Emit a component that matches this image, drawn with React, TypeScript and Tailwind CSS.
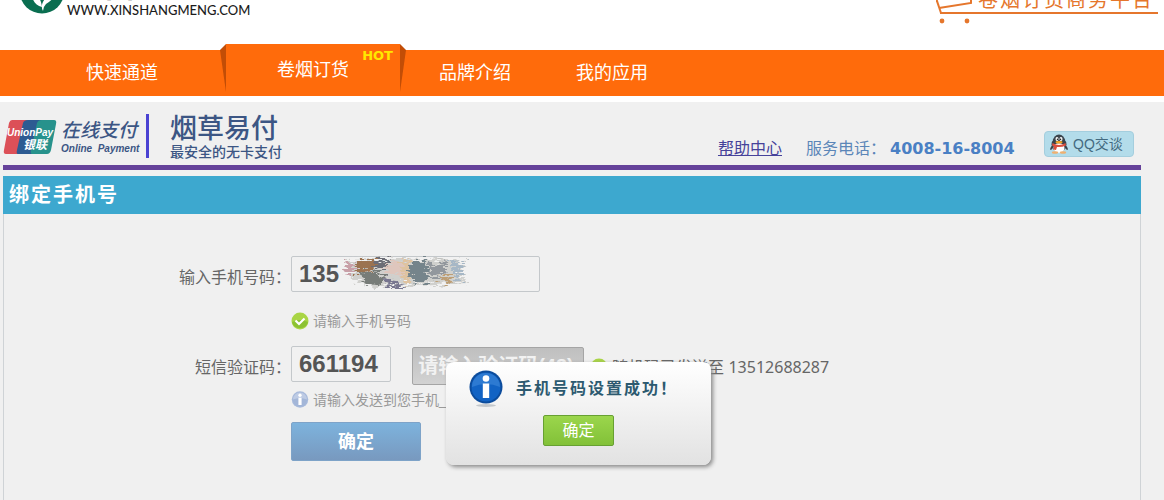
import React from "react";

function LeafLogo() {
  return (
    <svg viewBox="0 0 44 44" className="h-11 w-11 shrink-0" aria-hidden="true">
      <ellipse cx="22" cy="22" rx="22" ry="21.500" fill="#0a6e50" />
      <path d="M22 37 C15 35 12 31 11 20 C17 25 21 28 22 37 Z" fill="#fff" />
      <path d="M23 41 C20 36 22 29 36 18 C35 28 32 30 26 34 Q23 37 23 41 Z" fill="#fff" />
    </svg>
  );
}

function CartOutline() {
  return (
    <svg viewBox="0 0 224 46" className="absolute inset-0 h-full w-full" fill="none" stroke="#e5762c" aria-hidden="true">
      <path d="M0 20 L4 32 L5 35" strokeWidth="2" />
      <path d="M3 30 L35 25 L35 14" strokeWidth="2" />
      <path d="M4 35 H222" strokeWidth="2" />
      <circle cx="6" cy="43" r="2.4" fill="#e5762c" stroke="none" />
      <circle cx="31" cy="43" r="2.4" fill="#e5762c" stroke="none" />
    </svg>
  );
}

function UnionPay() {
  return (
    <div className="relative h-9 w-14 shrink-0">
      <svg viewBox="0 0 56 36" className="h-full w-full" aria-hidden="true">
        <path d="M9 1 H25 L17 35 H3 Q0 35 1 31 L6 4 Q7 1 9 1 Z" fill="#dc5058" />
        <path d="M25 1 H39 L31 35 H15 Q13 35 14 31 L20 4 Q21 1 25 1 Z" fill="#2d5b92" />
        <path d="M39 1 H51 Q54 1 53 5 L48 31 Q47 35 44 35 H29 Q27 35 28 31 L34 4 Q35 1 39 1 Z" fill="#27928c" />
      </svg>
      <div className="absolute inset-x-0 top-2 flex flex-col text-white italic">
        <span className="pl-1 text-[10px] leading-3 font-bold">UnionPay</span>
        <span className="pl-5 text-xs leading-3 font-bold">银联</span>
      </div>
    </div>
  );
}

function Penguin() {
  return (
    <svg viewBox="0 0 20 20" className="h-5 w-5" aria-hidden="true">
      <ellipse cx="10" cy="10.500" rx="7.500" ry="7.500" fill="#3b444c" />
      <path d="M2.500 12 Q0 16 2 16 L5 13 Z M17.500 12 Q20 16 18 16 L15 13 Z" fill="#3b444c" />
      <ellipse cx="10" cy="7" rx="6" ry="6.500" fill="#3b444c" />
      <ellipse cx="10" cy="14" rx="5.500" ry="4.800" fill="#fff" />
      <ellipse cx="8" cy="5" rx="1.500" ry="2" fill="#fff" />
      <ellipse cx="12" cy="5" rx="1.500" ry="2" fill="#fff" />
      <circle cx="8.400" cy="5.300" r=".7" fill="#111" />
      <circle cx="11.600" cy="5.300" r=".7" fill="#111" />
      <ellipse cx="10" cy="8.200" rx="3.500" ry="1.200" fill="#f5a623" />
      <path d="M3.500 9 Q10 13 16.500 9 L17 11.500 Q10 14.500 3 11.500 Z M5 12 L8 13 L7 16 L4.500 15.500 Z" fill="#d9503f" />
      <ellipse cx="6" cy="18.500" rx="3.200" ry="1.300" fill="#f0b070" />
      <ellipse cx="14" cy="18.500" rx="3.200" ry="1.300" fill="#f0b070" />
    </svg>
  );
}

function CheckBadge() {
  return (
    <svg viewBox="0 0 18 18" className="h-[18px] w-[18px] shrink-0" aria-hidden="true">
      <circle cx="9" cy="9" r="8.500" fill="#a9d545" />
      <path d="M1 10 Q9 6 17 10 A8.300 8.300 0 0 1 1 10 Z" fill="#8cc232" />
      <path d="M4.500 8.500 L8 12 L13.500 6.500" fill="none" stroke="#fff" strokeWidth="2.200" />
    </svg>
  );
}

function InfoBadge({ pale }: { pale?: boolean }) {
  return (
    <svg viewBox="0 0 36 38" className={pale ? "h-[19px] w-[18px] shrink-0" : "h-[38px] w-9 shrink-0"} aria-hidden="true">
      {!pale && <ellipse cx="18" cy="35.500" rx="10" ry="1.500" fill="#c4c8cc" />}
      <circle cx="18" cy="17" r="16.500" fill={pale ? "#a9bbdc" : "#0c4c9c"} />
      <circle cx="18" cy="17" r="14.500" fill={pale ? "#a3b6d8" : "#1263c4"} />
      <path d="M4 17 A14 14 0 0 1 32 17 Q18 11 4 17 Z" fill={pale ? "#becbe4" : "#2d7ad2"} />
      <circle cx="18" cy="8.500" r="3.300" fill="#fff" />
      <path d="M14.800 13.500 H21.200 V28 H14.800 Z" fill="#fff" />
    </svg>
  );
}

function Smudge() {
  return (
    <svg viewBox="0 0 128 34" className="absolute top-0 left-[50px] h-[34px] w-32" aria-hidden="true">
      <defs>
        <filter id="rough" x="-5%" y="-10%" width="110%" height="120%">
          <feTurbulence type="fractalNoise" baseFrequency="0.12 0.5" numOctaves="3" seed="4" result="n" />
          <feDisplacementMap in="SourceGraphic" in2="n" scale="18" xChannelSelector="R" yChannelSelector="G" result="d" />
          <feGaussianBlur in="d" stdDeviation="0.7" />
        </filter>
      </defs>
      <g filter="url(#rough)">
        <path d="M4 4 L62 2 L126 5 L118 14 L127 27 L78 30 L58 26 L64 33 L40 30 L32 33 L10 22 Z" fill="#d0d0cd" />
        <path d="M2 6 H12 V18 H4 Z" fill="#c8a0a8" />
        <path d="M15 4 L38 4 L30 14 L16 18 Z" fill="#9b7351" />
        <path d="M34 4 L50 3 L42 13 L34 14 Z" fill="#6c6d76" />
        <path d="M20 18 L34 14 L44 24 L26 31 Z" fill="#777c78" />
        <path d="M42 8 L60 6 L62 20 L48 18 Z" fill="#dfc6bd" />
        <path d="M42 22 L56 24 L62 33 L46 30 Z" fill="#77758f" />
        <path d="M60 5 L69 4 L68 28 L62 26 Z" fill="#dfc3a0" />
        <path d="M70 4 L85 4 L86 26 L74 28 L68 20 Z" fill="#75848b" />
        <path d="M87 8 L107 6 L103 18 L90 22 Z" fill="#92979d" />
        <path d="M98 21 L108 19 L110 28 L102 26 Z" fill="#bd9e74" />
        <path d="M110 6 L124 5 L117 13 L122 26 L112 22 Z" fill="#a6b7c6" />
      </g>
    </svg>
  );
}

const field =
  "h-9 rounded-xs border border-[#c4c8cb] bg-[#f1f1f1] px-[7px] text-2xl font-bold text-[#555]";

export default function App() {
  return (
    <div className="min-h-screen overflow-hidden bg-[#f0f0f0] font-['Liberation_Sans','Noto_Sans_CJK_SC',sans-serif] text-[#666]">
      <header className="flex h-[50px] items-start justify-between overflow-hidden bg-white pr-1 pl-5">
        <div className="-mt-[30px] flex">
          <LeafLogo />
          <div className="flex flex-col pl-[3px] text-[#1c1c1c]">
            <span className="h-8 pl-4 text-[32px] leading-8 font-bold tracking-[10px] text-[#333]">新商盟</span>
            <span className="font-['Lato','Noto_Sans_CJK_SC',sans-serif] text-[13px] leading-4 font-medium">WWW.XINSHANGMENG.COM</span>
          </div>
        </div>
        <div className="relative -mt-[22px] h-[46px] w-56 pt-3 pl-[42px]">
          <CartOutline />
          <span className="block text-xl leading-5 tracking-[2px] whitespace-nowrap text-[#e5762c]">卷烟订货商务平台</span>
        </div>
      </header>

      <nav className="flex h-[46px] bg-[#ff6b0b] text-lg leading-[46px] text-white">
        <a href="#fast" className="ml-[86px] w-[134px]">快速通道</a>
        <div className="-mt-[6px] flex h-[52px] w-[186px]">
          <svg viewBox="0 0 6 52" className="h-full w-[6px]" aria-hidden="true">
            <path d="M0 6 L6 0 V48 Z" fill="#c24d06" />
          </svg>
          <a href="#order" className="relative flex-1 bg-[#ff6b0b] pl-[51px] leading-[52px]">
            卷烟订货
            <span className="absolute top-1 right-[7px] font-['DejaVu_Sans',sans-serif] text-[13px] leading-4 font-bold text-[#ffe800]">HOT</span>
          </a>
          <svg viewBox="0 0 6 52" className="h-full w-[6px]" aria-hidden="true">
            <path d="M6 6 L0 0 V48 Z" fill="#c24d06" />
          </svg>
        </div>
        <a href="#brand" className="ml-[33px] w-[137px]">品牌介绍</a>
        <a href="#apps">我的应用</a>
      </nav>
      <div className="h-[6px] bg-white" />

      <main className="mr-[23px] ml-[3px]">
        <div className="flex h-[68px] items-start border-b-[5px] border-[#65429a] text-[#3c5684]">
          <div className="flex items-center pt-[17px]">
            <UnionPay />
            <div className="flex w-[87px] flex-col pl-[2px] italic">
              <span className="text-[19px] leading-6 font-medium whitespace-nowrap">在线支付</span>
              <span className="text-[10px] leading-3 font-bold whitespace-nowrap">Online&nbsp; Payment</span>
            </div>
          </div>
          <div className="mt-3 h-11 w-[3px] bg-[#4a42d2]" />
          <div className="flex flex-col pt-3 pl-[21px]">
            <span className="text-[27px] leading-[30px] font-medium">烟草易付</span>
            <span className="text-sm leading-4 font-medium">最安全的无卡支付</span>
          </div>
          <div className="mt-[29px] mr-[7px] ml-auto flex items-start text-base leading-9">
            <a href="#help" className="text-[#46429a] underline">帮助中心</a>
            <span className="ml-6 text-[#5b86b8]">服务电话：</span>
            <span className="ml-1 w-[154px] font-['DejaVu_Sans',sans-serif] leading-9 font-bold text-[#4a80c4]">4008-16-8004</span>
            <button type="button" className="flex h-[26px] w-[90px] items-center gap-1 rounded-sm border border-[#a4cede] bg-[#b3dcea] pl-1 text-sm whitespace-nowrap text-[#436a80]">
              <Penguin />
              QQ交谈
            </button>
          </div>
        </div>

        <section className="relative mt-[6px] min-h-[324px] border-x border-[#cfd3d6]">
          <h1 className="-mx-px h-[38px] bg-[#3da8cf] pl-[6px] text-xl leading-[38px] font-bold tracking-[2px] text-white">绑定手机号</h1>
          <form className="grid grid-cols-[287px_1fr] pt-[42px]" onSubmit={(e) => e.preventDefault()}>
            <label htmlFor="phone" className="text-right text-base leading-[44px]">输入手机号码：</label>
            <div>
              <div className="relative h-9 w-[249px]">
                <input id="phone" defaultValue="135" className={`${field} w-full`} />
                <Smudge />
              </div>
              <p className="mt-5 flex h-[18px] items-center gap-1 text-sm text-[#999]">
                <CheckBadge />
                请输入手机号码
              </p>
            </div>

            <label htmlFor="code" className="mt-4 text-right text-base leading-[44px]">短信验证码：</label>
            <div className="mt-4">
              <div className="flex h-9 items-start">
                <input id="code" defaultValue="661194" className={`${field} w-[100px]`} />
                <button type="button" className="mt-px ml-[21px] h-[38px] w-[172px] shrink-0 rounded-xs border border-[#a5a5a5] bg-linear-to-b from-[#bfbfbf] to-[#d2d2d2] pr-1 text-xl font-bold whitespace-nowrap text-[#f2f2f2]">
                  请输入验证码(43)
                </button>
                <span className="mt-3 ml-[6px] flex h-[18px] items-center gap-1 text-base whitespace-nowrap">
                  <CheckBadge />
                  <span>
                    随机码已发送至{" "}
                    <span className="font-['Noto_Sans',sans-serif]">13512688287</span>
                  </span>
                </span>
              </div>
              <p className="mt-2 flex h-5 items-center gap-1 text-sm text-[#999]">
                <InfoBadge pale />
                请输入发送到您手机_
              </p>
              <button type="submit" className="mt-3 block h-[39px] w-[130px] rounded-xs border border-[#7ea3c8] bg-linear-to-b from-[#7db3dd] to-[#7899bf] text-lg font-bold text-white">
                确定
              </button>
            </div>
          </form>

          <div
            role="alertdialog"
            aria-labelledby="notice"
            className="absolute top-[186px] left-[442px] h-[103px] w-[265px] rounded-lg bg-linear-to-b from-white to-[#e2e2e2] pt-2 shadow-[2px_2px_4px_#888]"
          >
            <div className="flex items-start gap-3 pl-[22px]">
              <InfoBadge />
              <p id="notice" className="text-base leading-[38px] font-bold tracking-[2px] whitespace-nowrap text-[#2d5a70]">手机号码设置成功！</p>
            </div>
            <button type="button" className="mx-auto mt-[7px] block h-[31px] w-[71px] rounded-xs border border-[#67a032] bg-linear-to-b from-[#9bd64c] to-[#82c138] text-base text-white">
              确定
            </button>
          </div>
        </section>
      </main>
    </div>
  );
}
